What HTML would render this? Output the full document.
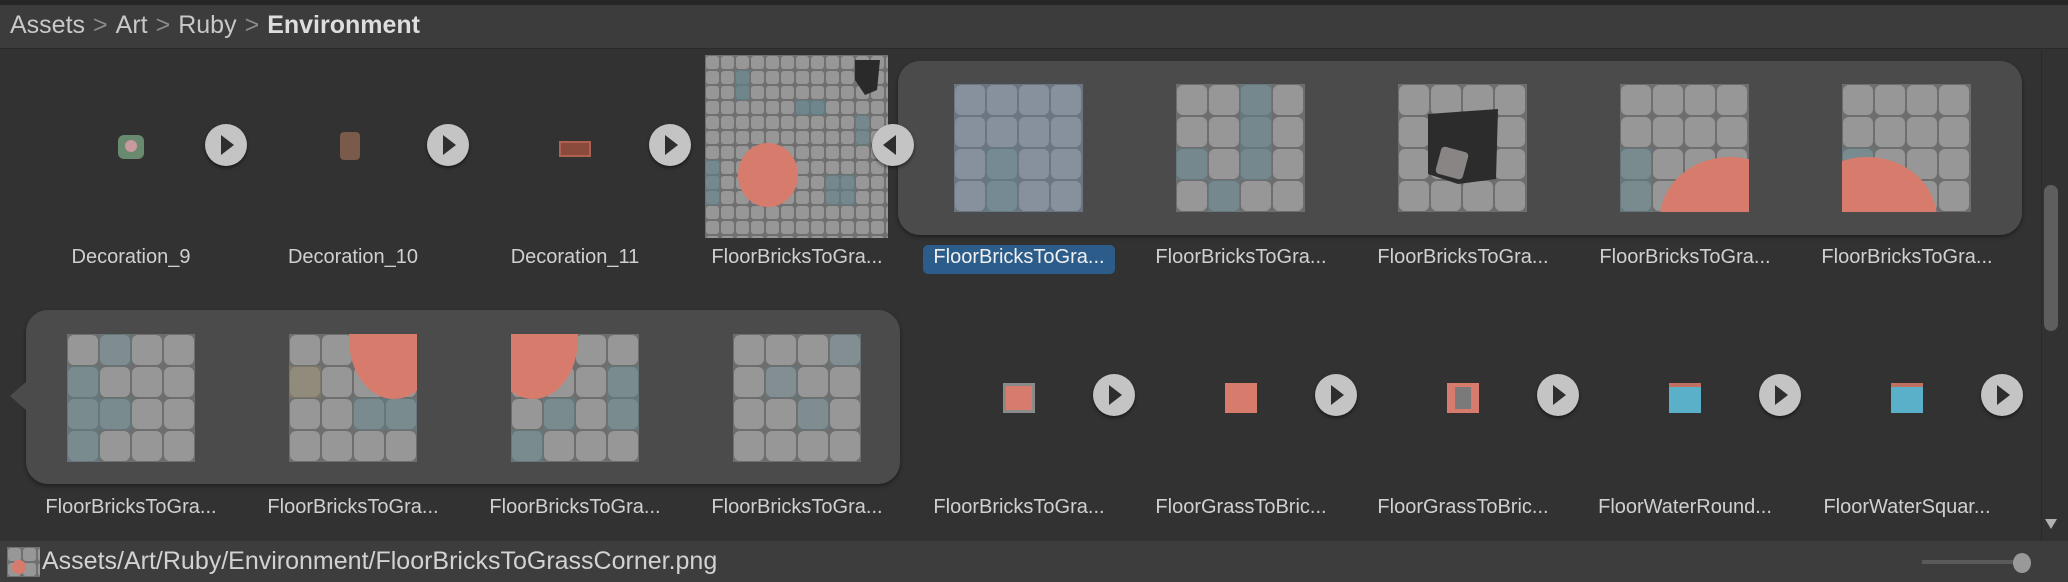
<!DOCTYPE html>
<html><head><meta charset="utf-8"><style>
*{margin:0;padding:0;box-sizing:border-box}
body{width:2068px;height:582px;background:#323232;position:relative;overflow:hidden;font-family:"Liberation Sans",sans-serif;color:#d2d2d2}
.abs{position:absolute}
.top{left:0;top:0;width:2068px;height:49px;background:#3c3c3c;border-top:5px solid #262626;border-bottom:1px solid #2a2a2a}
.crumb{left:10px;top:11px;font-size:25px;color:#c8c8c8;white-space:nowrap}
.crumb b{color:#dedede}
.crumb .s{color:#8a8a8a;margin:0 8px}
.lbl{font-size:20px;color:#d0d0d0;text-align:center;width:210px;white-space:nowrap}
.play{width:42px;height:42px;border-radius:50%;background:#c4c4c4;box-shadow:0 2px 3px rgba(0,0,0,.5)}
.play:after{content:"";position:absolute;left:16px;top:11px;border-left:13px solid #2e2e2e;border-top:10px solid transparent;border-bottom:10px solid transparent}
.panel{background:#4b4b4b;border-radius:22px;box-shadow:0 2px 4px rgba(0,0,0,.4)}
.bot{left:0;top:541px;width:2068px;height:41px;background:#3d3d3d}
</style></head><body>
<svg width="0" height="0" style="position:absolute">
<defs>
<pattern id="t" width="32" height="32" patternUnits="userSpaceOnUse"><rect width="32" height="32" fill="#6e6e6e"/><rect x="1" y="1" width="30" height="30" rx="6" fill="#979797"/></pattern>
<pattern id="ts" width="15" height="15" patternUnits="userSpaceOnUse"><rect width="15" height="15" fill="#707070"/><rect x="1" y="1" width="13" height="13" rx="3" fill="#979797"/></pattern>
</defs></svg>

<div class="abs top"></div>
<div class="abs crumb">Assets<span class="s">&gt;</span>Art<span class="s">&gt;</span>Ruby<span class="s">&gt;</span><b>Environment</b></div>

<div class="abs" style="left:118px;top:135px;width:26px;height:24px;background:#6a8a70;border-radius:6px"><div class="abs" style="left:7px;top:5px;width:12px;height:12px;background:#c89aa0;border-radius:50%"></div></div>
<div class="abs" style="left:340px;top:132px;width:20px;height:28px;background:#7a5a4a;border-radius:4px"></div>
<div class="abs" style="left:559px;top:141px;width:32px;height:16px;background:#8a4a3c;border:2px solid #b06050"></div>
<div class="abs play" style="left:205px;top:124px"></div>
<div class="abs play" style="left:427px;top:124px"></div>
<div class="abs play" style="left:649px;top:124px"></div>

<svg class="abs" style="left:705px;top:55px" width="183" height="183"><rect width="183" height="183" fill="url(#ts)"/>
<rect x="30" y="15" width="15" height="30" fill="#5d7f88" opacity=".7"/><rect x="90" y="45" width="30" height="15" fill="#5d7f88" opacity=".7"/><rect x="0" y="105" width="15" height="45" fill="#5d7f88" opacity=".6"/><rect x="120" y="120" width="30" height="30" fill="#5d7f88" opacity=".6"/><rect x="150" y="60" width="15" height="30" fill="#5d7f88" opacity=".6"/>
<path d="M150 5 L175 5 L172 35 L160 40 L150 25Z" fill="#2a2a2a"/>
<ellipse cx="63" cy="120" rx="30" ry="32" fill="#d77c6c"/></svg>

<div class="abs panel" style="left:898px;top:61px;width:1124px;height:174px"></div>
<div class="abs" style="left:2005px;top:138px;border-left:14px solid #4b4b4b;border-top:14px solid transparent;border-bottom:14px solid transparent"></div>
<div class="abs" style="left:872px;top:124px;width:42px;height:42px;border-radius:50%;background:#c4c4c4;box-shadow:0 2px 3px rgba(0,0,0,.5)"><div class="abs" style="left:11px;top:11px;border-right:13px solid #2e2e2e;border-top:10px solid transparent;border-bottom:10px solid transparent"></div></div>

<svg class="abs" style="left:954px;top:84px" width="129" height="128"><rect width="129" height="128" fill="url(#t)"/><rect width="129" height="128" fill="#6a86a8" opacity=".35"/><rect x="32" y="64" width="32" height="64" fill="#5d7f88" opacity=".4"/></svg>
<svg class="abs" style="left:1176px;top:84px" width="129" height="128"><rect width="129" height="128" fill="url(#t)"/><rect x="64" y="0" width="32" height="96" fill="#5d7f88" opacity=".6"/><rect x="0" y="64" width="32" height="32" fill="#5d7f88" opacity=".6"/><rect x="32" y="96" width="32" height="32" fill="#5d7f88" opacity=".6"/></svg>
<svg class="abs" style="left:1398px;top:84px" width="129" height="128"><rect width="129" height="128" fill="url(#t)"/><path d="M30 30 L100 25 L98 95 L60 100 L30 90Z" fill="#2c2c2c"/><rect x="40" y="65" width="28" height="28" rx="4" fill="#8a8585" transform="rotate(15 54 79)"/></svg>
<svg class="abs" style="left:1620px;top:84px" width="129" height="128"><rect width="129" height="128" fill="url(#t)"/><rect x="0" y="64" width="32" height="64" fill="#5d7f88" opacity=".5"/><ellipse cx="110" cy="135" rx="70" ry="62" fill="#d77c6c"/></svg>
<svg class="abs" style="left:1842px;top:84px" width="129" height="128"><rect width="129" height="128" fill="url(#t)"/><rect x="0" y="64" width="32" height="32" fill="#5d7f88" opacity=".5"/><ellipse cx="25" cy="135" rx="70" ry="62" fill="#d77c6c"/></svg>

<div class="abs lbl" style="left:26px;top:246px">Decoration_9</div>
<div class="abs lbl" style="left:248px;top:246px">Decoration_10</div>
<div class="abs lbl" style="left:470px;top:246px">Decoration_11</div>
<div class="abs lbl" style="left:692px;top:246px">FloorBricksToGra...</div>
<div class="abs" style="left:923px;top:245px;width:192px;height:29px;background:#2c5d8a;border-radius:5px"></div>
<div class="abs lbl" style="left:914px;top:246px;color:#f0f0f0">FloorBricksToGra...</div>
<div class="abs lbl" style="left:1136px;top:246px">FloorBricksToGra...</div>
<div class="abs lbl" style="left:1358px;top:246px">FloorBricksToGra...</div>
<div class="abs lbl" style="left:1580px;top:246px">FloorBricksToGra...</div>
<div class="abs lbl" style="left:1802px;top:246px">FloorBricksToGra...</div>

<div class="abs panel" style="left:26px;top:310px;width:874px;height:174px"></div>
<div class="abs" style="left:10px;top:382px;border-right:16px solid #4b4b4b;border-top:14px solid transparent;border-bottom:14px solid transparent"></div>
<svg class="abs" style="left:67px;top:334px" width="128" height="128"><rect width="128" height="128" fill="url(#t)"/><rect x="0" y="32" width="32" height="96" fill="#5d7f88" opacity=".5"/><rect x="32" y="0" width="32" height="32" fill="#5d7f88" opacity=".4"/><rect x="32" y="64" width="32" height="32" fill="#5d7f88" opacity=".5"/></svg>
<svg class="abs" style="left:289px;top:334px" width="128" height="128"><rect width="128" height="128" fill="url(#t)"/><rect x="0" y="32" width="32" height="32" fill="#8a8060" opacity=".5"/><rect x="64" y="64" width="64" height="32" fill="#5d7f88" opacity=".5"/><ellipse cx="105" cy="5" rx="45" ry="60" fill="#d77c6c"/></svg>
<svg class="abs" style="left:511px;top:334px" width="128" height="128"><rect width="128" height="128" fill="url(#t)"/><rect x="32" y="64" width="32" height="32" fill="#5d7f88" opacity=".5"/><rect x="96" y="32" width="32" height="64" fill="#5d7f88" opacity=".5"/><rect x="0" y="96" width="32" height="32" fill="#5d7f88" opacity=".5"/><ellipse cx="22" cy="5" rx="45" ry="60" fill="#d77c6c"/></svg>
<svg class="abs" style="left:733px;top:334px" width="128" height="128"><rect width="128" height="128" fill="url(#t)"/><rect x="32" y="32" width="32" height="32" fill="#5d7f88" opacity=".35"/><rect x="64" y="64" width="32" height="32" fill="#5d7f88" opacity=".4"/><rect x="96" y="0" width="32" height="32" fill="#5d7f88" opacity=".35"/></svg>

<div class="abs" style="left:1003px;top:383px;width:32px;height:30px;background:#d77c6c;border:3px solid #8a8a8a"></div>
<div class="abs" style="left:1225px;top:383px;width:32px;height:30px;background:#d77c6c"></div>
<div class="abs" style="left:1447px;top:383px;width:32px;height:30px;background:#d77c6c"><div class="abs" style="left:8px;top:4px;width:16px;height:22px;background:#7a7a7a"></div></div>
<div class="abs" style="left:1669px;top:383px;width:32px;height:30px;background:#5ab0c8;border-top:4px solid #c07060"></div>
<div class="abs" style="left:1891px;top:383px;width:32px;height:30px;background:#5ab0c8;border-top:4px solid #c07060"></div>
<div class="abs play" style="left:1093px;top:374px"></div>
<div class="abs play" style="left:1315px;top:374px"></div>
<div class="abs play" style="left:1537px;top:374px"></div>
<div class="abs play" style="left:1759px;top:374px"></div>
<div class="abs play" style="left:1981px;top:374px"></div>

<div class="abs lbl" style="left:26px;top:496px">FloorBricksToGra...</div>
<div class="abs lbl" style="left:248px;top:496px">FloorBricksToGra...</div>
<div class="abs lbl" style="left:470px;top:496px">FloorBricksToGra...</div>
<div class="abs lbl" style="left:692px;top:496px">FloorBricksToGra...</div>
<div class="abs lbl" style="left:914px;top:496px">FloorBricksToGra...</div>
<div class="abs lbl" style="left:1136px;top:496px">FloorGrassToBric...</div>
<div class="abs lbl" style="left:1358px;top:496px">FloorGrassToBric...</div>
<div class="abs lbl" style="left:1580px;top:496px">FloorWaterRound...</div>
<div class="abs lbl" style="left:1802px;top:496px">FloorWaterSquar...</div>

<div class="abs" style="left:2041px;top:50px;width:1px;height:491px;background:#2a2a2a"></div>
<div class="abs" style="left:2044px;top:185px;width:14px;height:146px;background:#5e5e5e;border-radius:7px"></div>
<div class="abs" style="left:2045px;top:519px;border-top:10px solid #b0b0b0;border-left:6px solid transparent;border-right:6px solid transparent"></div>

<div class="abs bot"></div>
<svg class="abs" style="left:7px;top:547px" width="33" height="30"><rect width="33" height="30" fill="url(#ts)"/><circle cx="12" cy="20" r="7" fill="#d77c6c"/></svg>
<div class="abs" style="left:42px;top:547px;font-size:25px;color:#d2d2d2;white-space:nowrap">Assets/Art/Ruby/Environment/FloorBricksToGrassCorner.png</div>
<div class="abs" style="left:1922px;top:560px;width:92px;height:4px;background:#5a5a5a"></div>
<div class="abs" style="left:2013px;top:553px;width:18px;height:20px;border-radius:50%;background:#999"></div>
</body></html>
